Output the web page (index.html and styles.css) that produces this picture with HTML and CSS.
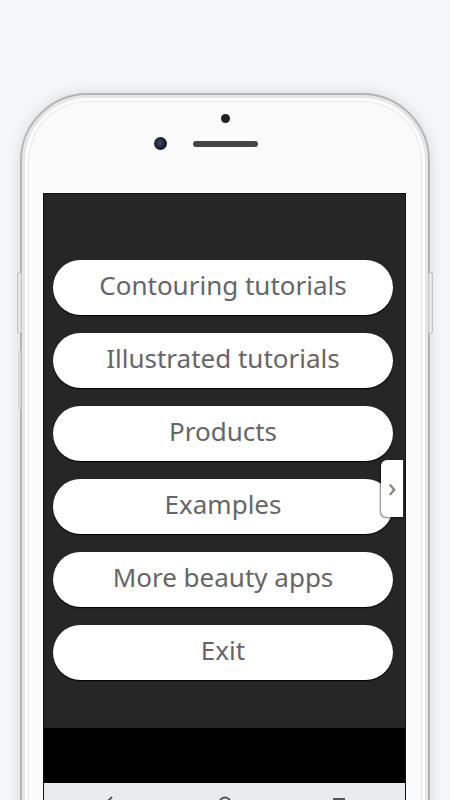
FILE: index.html
```html
<html lang="en">
<head>
    <meta charset="UTF-8">
    <meta name="viewport" content="width=device-width, initial-scale=1.0">
    <title>Contouring</title>
    <link rel="stylesheet" href="styles.css">
</head>
<body>
    <div class="phone">
        <div class="bezel">
            <div class="sensor-dot"></div>
            <div class="sensor-row">
                <div class="camera"></div>
                <div class="speaker"></div>
                <div class="spacer"></div>
            </div>
        </div>
        <div class="screen">
            <div class="menu">
                <button class="menu-btn">Contouring tutorials</button>
                <button class="menu-btn">Illustrated tutorials</button>
                <button class="menu-btn">Products</button>
                <button class="menu-btn">Examples</button>
                <button class="menu-btn">More beauty apps</button>
                <button class="menu-btn">Exit</button>
                <div class="side-tab">&rsaquo;</div>
            </div>
            <div class="ad-band"></div>
            <div class="nav-bar">
                <svg class="nav-icon" width="14" height="14" viewBox="0 0 14 14"><path d="M9 1 L3 7 L9 13" stroke="#555" stroke-width="2" fill="none"/></svg>
                <svg class="nav-icon" width="14" height="14" viewBox="0 0 14 14"><circle cx="7" cy="7" r="5.5" stroke="#555" stroke-width="2" fill="none"/></svg>
                <svg class="nav-icon" width="14" height="14" viewBox="0 0 14 14"><rect x="2" y="3" width="10" height="10" stroke="#555" stroke-width="2" fill="none"/></svg>
            </div>
        </div>
    </div>
</body>
</html>
```

FILE: styles.css
```css
body {
    margin: 0;
    height: 800px;
    overflow: hidden;
    background: #f5f6f8;
    font-family: "Noto Sans", "Open Sans", sans-serif;
}

.phone {
    position: relative;
    box-sizing: border-box;
    width: 410px;
    height: 900px;
    margin: 93px auto 0;
    background: #fbfbfb;
    border: 2px solid #b4b4b4;
    border-radius: 68px;
    box-shadow: 0 0 14px rgba(0, 0, 0, 0.12),
                inset 0 0 0 3px #e6e6e6,
                inset 0 0 0 6px #fdfdfd,
                inset 0 0 0 7px #e8e8e8;
}
.phone::before, .phone::after {
    content: "";
    position: absolute;
    width: 3px;
    background: #e4e4e4;
    border: 1px solid #c4c4c4;
    border-radius: 2px;
}
.phone::before {
    left: -5px;
    top: 177px;
    height: 60px;
    box-shadow: 0 77px 0 -1px #d8d8d8;
}
.phone::after {
    right: -5px;
    top: 177px;
    height: 60px;
}

.bezel {
    height: 98px;
    display: flex;
    flex-direction: column;
    align-items: center;
}
.sensor-dot {
    width: 9px;
    height: 9px;
    margin-top: 19px;
    border-radius: 50%;
    background: #231f20;
}
.sensor-row {
    display: flex;
    align-items: center;
    gap: 26px;
    margin-top: 14px;
}
.camera {
    width: 13px;
    height: 13px;
    border-radius: 50%;
    background: radial-gradient(circle at 45% 45%, #3b4a6b 0, #1a1d2a 55%, #0c0c10 100%);
}
.speaker {
    width: 65px;
    height: 6px;
    border-radius: 3px;
    background: #454545;
}
.spacer {
    width: 13px;
}

.screen {
    width: 361px;
    margin-left: 21px;
    border: 1px solid #111;
    background: #262626;
}
.menu {
    position: relative;
    display: flex;
    flex-direction: column;
    gap: 18px;
    padding: 66px 12px 48px 9px;
}
.menu-btn {
    height: 55px;
    border: none;
    border-radius: 28px;
    background: #fff;
    box-shadow: 0 1px 1px #000;
    color: #666;
    font-family: "Noto Sans", "Open Sans", sans-serif;
    font-size: 26px;
    padding: 0 0 5px;
}
.side-tab {
    position: absolute;
    top: 266px;
    right: 2px;
    width: 22px;
    height: 57px;
    display: flex;
    align-items: center;
    justify-content: center;
    background: #fff;
    border-radius: 6px 0 0 6px;
    box-shadow: -1px 1px 2px rgba(0, 0, 0, 0.5);
    color: #808080;
    font-size: 28px;
    padding-bottom: 5px;
    box-sizing: border-box;
}
.ad-band {
    height: 55px;
    background: #000;
}
.nav-bar {
    height: 40px;
    background: #e9ebed;
    display: flex;
    justify-content: space-between;
    align-items: flex-start;
    padding: 13px 59px 0;
}
```
